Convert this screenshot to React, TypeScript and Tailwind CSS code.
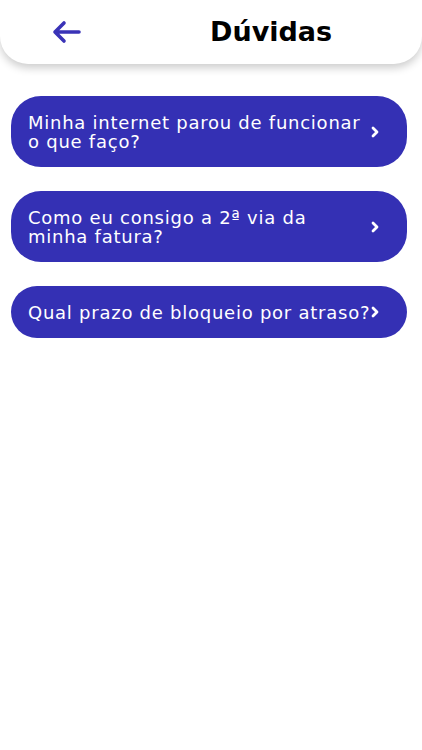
const questions = [
  ['Minha internet parou de funcionar', 'o que faço?'],
  ['Como eu consigo a 2ª via da', 'minha fatura?'],
  ['Qual prazo de bloqueio por atraso?'],
];

function Chevron() {
  return (
    <svg width="10" height="12" viewBox="0 0 10 12" fill="none" stroke="white" strokeWidth="2.8" strokeLinecap="round" strokeLinejoin="round" className="shrink-0">
      <path d="M3 2l4 4-4 4" />
    </svg>
  );
}

export default function App() {
  return (
    <div className="min-h-[750px] bg-white" style={{ fontFamily: '"DejaVu Sans", sans-serif' }}>
      {/* Header */}
      <header className="flex h-16 items-center rounded-b-[28px] bg-white pl-[52px] shadow-[0_4px_8px_rgba(0,0,0,0.2)]">
        <button className="text-[#3a33b7]">
          <svg width="30" height="26" viewBox="0 0 30 26" fill="none" stroke="currentColor" strokeWidth="3.6" strokeLinecap="round" strokeLinejoin="round">
            <path d="M27 13H3M12 4L3 13l9 9" />
          </svg>
        </button>
        <h1 className="ml-[128px] text-[27px] font-bold text-black">Dúvidas</h1>
      </header>

      {/* Perguntas */}
      <div className="mt-8 flex flex-col gap-6 pl-[11px] pr-[15px]">
        {questions.map((lines, idx) => (
          <button
            key={idx}
            className="flex w-full items-center rounded-[30px] bg-[#3430b4] py-[16.5px] pl-[17px] pr-[27px] text-left"
          >
            <span className="flex flex-1 flex-col text-[18px] leading-[19px] tracking-[0.75px] whitespace-nowrap text-white">
              {lines.map((line) => (
                <span key={line}>{line}</span>
              ))}
            </span>
            <Chevron />
          </button>
        ))}
      </div>
    </div>
  );
}
